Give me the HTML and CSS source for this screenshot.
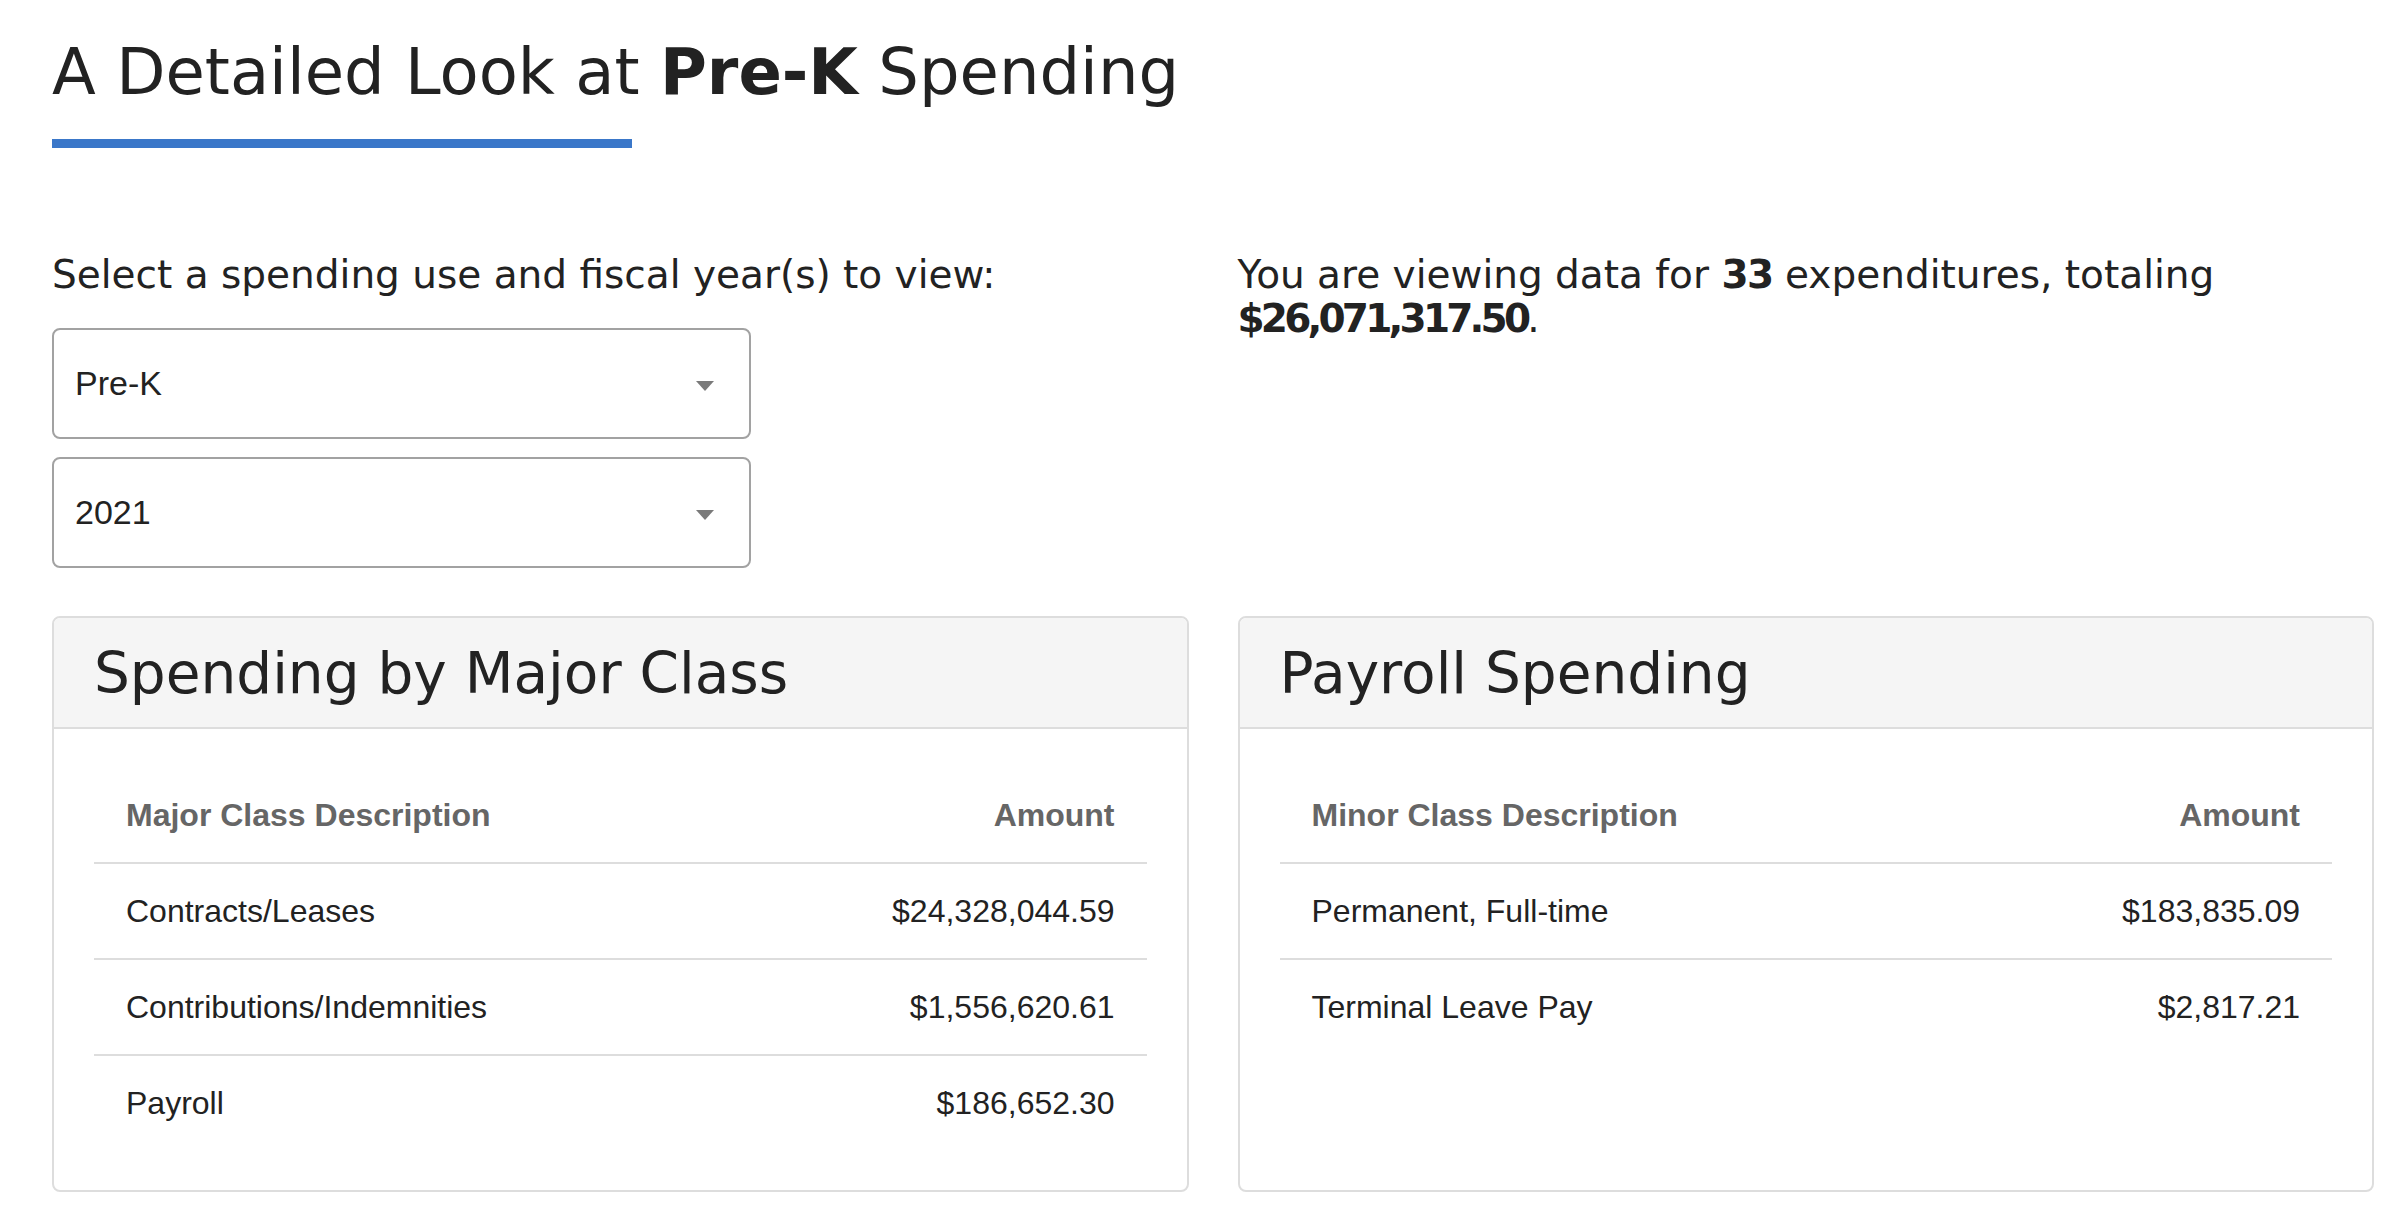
FILE: index.html
```html
<!DOCTYPE html>
<html lang="en">
<head>
<meta charset="utf-8">
<title>A Detailed Look at Pre-K Spending</title>
<link rel="stylesheet" href="styles.css">
</head>
<body>
<main class="page">
  <h1 class="title">A Detailed Look at <strong>Pre-K</strong> Spending</h1>
  <div class="title-rule"></div>

  <section class="grid controls">
    <div class="control-col">
      <p class="lead">Select a spending use and fiscal year(s) to view:</p>
      <div class="select"><span class="select-value">Pre-K</span><span class="caret"></span></div>
      <div class="select"><span class="select-value">2021</span><span class="caret"></span></div>
    </div>
    <div class="summary-col">
      <p class="lead">You are viewing data for <strong class="count">33</strong> expenditures, totaling <strong class="total">$26,071,317.50</strong>.</p>
    </div>
  </section>

  <section class="grid cards">
    <div class="card">
      <div class="card-header"><h2 class="card-title">Spending by Major Class</h2></div>
      <div class="card-body">
        <table class="data">
          <thead>
            <tr><th>Major Class Description</th><th class="num">Amount</th></tr>
          </thead>
          <tbody>
            <tr><td>Contracts/Leases</td><td class="num">$24,328,044.59</td></tr>
            <tr><td>Contributions/Indemnities</td><td class="num">$1,556,620.61</td></tr>
            <tr><td>Payroll</td><td class="num">$186,652.30</td></tr>
          </tbody>
        </table>
      </div>
    </div>
    <div class="card">
      <div class="card-header"><h2 class="card-title">Payroll Spending</h2></div>
      <div class="card-body">
        <table class="data">
          <thead>
            <tr><th>Minor Class Description</th><th class="num">Amount</th></tr>
          </thead>
          <tbody>
            <tr><td>Permanent, Full-time</td><td class="num">$183,835.09</td></tr>
            <tr><td>Terminal Leave Pay</td><td class="num">$2,817.21</td></tr>
          </tbody>
        </table>
      </div>
    </div>
  </section>
</main>
</body>
</html>
```

FILE: styles.css
```css
* { box-sizing: border-box; }

html, body {
  margin: 0;
  padding: 0;
  background: #ffffff;
}

body {
  font-family: "DejaVu Sans", "Liberation Sans", sans-serif;
  color: #222222;
}

.page {
  padding: 0 28px 40px 52px;
}

.title {
  margin: 34px 0 0 0;
  font-size: 64px;
  line-height: 76px;
  font-weight: 400;
  color: #222222;
}

.title strong {
  font-weight: 700;
}

.title-rule {
  width: 580px;
  height: 9px;
  margin-top: 29px;
  background: #3a77c9;
}

.grid {
  display: grid;
  grid-template-columns: 1fr 1fr;
  column-gap: 49px;
}

.controls {
  margin-top: 105px;
}

.lead {
  margin: 0;
  font-size: 39px;
  line-height: 44px;
  font-weight: 400;
  color: #222222;
}

.lead strong {
  font-weight: 700;
}

.lead .count {
  letter-spacing: -1.5px;
}

.lead .total {
  letter-spacing: -3.8px;
}

.control-col {
  display: flex;
  flex-direction: column;
  align-items: flex-start;
}

.control-col .lead {
  margin-bottom: 31px;
}

.select {
  width: 699px;
  height: 111px;
  border: 2px solid #a2a2a2;
  border-radius: 8px;
  display: flex;
  align-items: center;
  justify-content: space-between;
  padding: 0 35px 1px 21px;
  font-family: "Liberation Sans", Arial, sans-serif;
  font-size: 34px;
  color: #222222;
  background: #ffffff;
}

.select + .select {
  margin-top: 18px;
}

.caret {
  width: 0;
  height: 0;
  border-left: 9.5px solid transparent;
  border-right: 9.5px solid transparent;
  border-top: 10px solid #7a7a7a;
  margin-top: 6px;
}

.cards {
  margin-top: 48px;
}

.card {
  display: flex;
  flex-direction: column;
  border: 2px solid #dddddd;
  border-radius: 8px;
  overflow: hidden;
  background: #ffffff;
}

.card-header {
  background: #f5f5f5;
  border-bottom: 2px solid #dddddd;
  padding: 24px 40px 21px 40px;
}

.card-title {
  margin: 0;
  font-size: 56.5px;
  line-height: 64px;
  font-weight: 400;
  color: #222222;
}

.card-body {
  flex: 1;
  padding: 39px 40px 40px 40px;
}

.data {
  width: 100%;
  border-collapse: collapse;
  font-family: "Liberation Sans", Arial, sans-serif;
  font-size: 32px;
  line-height: 46px;
}

.data th,
.data td {
  padding: 24px 32px;
  text-align: left;
}

.data th {
  font-weight: 700;
  color: #666666;
  border-bottom: 2px solid #dddddd;
}

.data td {
  color: #222222;
}

.data tbody tr + tr td {
  border-top: 2px solid #dddddd;
}

.data .num {
  text-align: right;
}
```
